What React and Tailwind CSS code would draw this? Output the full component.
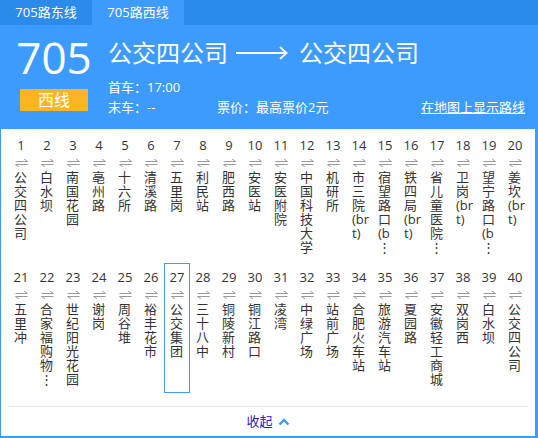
import React from "react";

const row1 = [
  ["公", "交", "四", "公", "司"],
  ["白", "水", "坝"],
  ["南", "国", "花", "园"],
  ["亳", "州", "路"],
  ["十", "六", "所"],
  ["清", "溪", "路"],
  ["五", "里", "岗"],
  ["利", "民", "站"],
  ["肥", "西", "路"],
  ["安", "医", "站"],
  ["安", "医", "附", "院"],
  ["中", "国", "科", "技", "大", "学"],
  ["机", "研", "所"],
  ["市", "三", "院", "(br", "t)"],
  ["宿", "望", "路", "口", "(b", "⋮"],
  ["铁", "四", "局", "(br", "t)"],
  ["省", "儿", "童", "医", "院", "⋮"],
  ["卫", "岗", "(br", "t)"],
  ["望", "宁", "路", "口", "(b", "⋮"],
  ["姜", "坎", "(br", "t)"],
];

const row2 = [
  ["五", "里", "冲"],
  ["合", "家", "福", "购", "物", "⋮"],
  ["世", "纪", "阳", "光", "花", "园"],
  ["谢", "岗"],
  ["周", "谷", "堆"],
  ["裕", "丰", "花", "市"],
  ["公", "交", "集", "团"],
  ["三", "十", "八", "中"],
  ["铜", "陵", "新", "村"],
  ["铜", "江", "路", "口"],
  ["凌", "湾"],
  ["中", "绿", "广", "场"],
  ["站", "前", "广", "场"],
  ["合", "肥", "火", "车", "站"],
  ["旅", "游", "汽", "车", "站"],
  ["夏", "园", "路"],
  ["安", "徽", "轻", "工", "商", "城"],
  ["双", "岗", "西"],
  ["白", "水", "坝"],
  ["公", "交", "四", "公", "司"],
];

function Arrows() {
  return (
    <svg width="13" height="8" viewBox="0 0 13 8" className="mx-auto mt-[6px]">
      <path d="M0.5 2.5H12.5L9 0" fill="none" stroke="#9a9a9a" strokeWidth="1" />
      <path d="M12.5 5.5H0.5L4 8" fill="none" stroke="#9a9a9a" strokeWidth="1" />
    </svg>
  );
}

function Station({ num, lines, current }) {
  return (
    <div
      className={
        "h-[130px] w-[26px] box-border " +
        (current ? "border border-[#3d9bfd]" : "border border-transparent")
      }
    >
      <div className="pt-[5px] text-center text-[13px] leading-[16px] text-[#333]">{num}</div>
      <Arrows />
      <div className="mt-[3px] pl-[5px] text-[13px] leading-[14px] text-[#333] whitespace-nowrap">
        {lines.map((c, i) => (
          <div key={i}>{c}</div>
        ))}
      </div>
    </div>
  );
}

export default function App() {
  return (
    <div
      className="w-[538px] h-[438px] flex flex-col bg-white"
      style={{ fontFamily: '"Open Sans", "Noto Sans CJK SC", sans-serif' }}
    >
      <div className="flex h-[25px] bg-[#2a8beb] text-white text-[13px] leading-[25px]">
        <div className="w-[92px] text-center">705路东线</div>
        <div className="w-[92px] text-center bg-[#3d9bfd]">705路西线</div>
      </div>

      <div className="flex h-[104px] bg-[#3d9bfd] text-white">
        <div className="w-[108px] flex flex-col items-center pt-[10px]">
          <div className="text-[44px] leading-[44px]">705</div>
          <div className="mt-[10px] w-[68px] h-[22px] bg-[#fbb423] text-center text-[16px] leading-[22px]">
            西线
          </div>
        </div>
        <div className="flex-1 flex flex-col pt-[14px]">
          <div className="flex items-center text-[24px] leading-[28px]">
            <span>公交四公司</span>
            <svg width="52" height="14" viewBox="0 0 52 14" className="ml-[8px] mr-[11px]">
              <path d="M0 7H50" stroke="white" strokeWidth="2" />
              <path d="M44 1L50.5 7L44 13" fill="none" stroke="white" strokeWidth="1.8" />
            </svg>
            <span>公交四公司</span>
          </div>
          <div className="mt-[10px] text-[13px] leading-[20px]">首车：17:00</div>
          <div className="flex text-[13px] leading-[20px] pr-[13px]">
            <span className="w-[109px]">末车：--</span>
            <span>票价：最高票价2元</span>
            <span className="ml-auto underline">在地图上显示路线</span>
          </div>
        </div>
      </div>

      <div className="flex-1 flex flex-col bg-white border-l border-r-[3px] border-b-2 border-[#3d9bfd] px-[7px] pt-[2px]">
        <div className="flex">
          {row1.map((l, i) => (
            <Station key={i} num={i + 1} lines={l} />
          ))}
        </div>
        <div className="flex mt-[2px]">
          {row2.map((l, i) => (
            <Station key={i} num={i + 21} lines={l} current={i + 21 === 27} />
          ))}
        </div>
        <div className="mt-[13px] h-px bg-[#e8e8e8]" />
        <div className="flex-1 flex items-center justify-center gap-[5px] text-[13px] text-[#2323c8]">
          <span>收起</span>
          <svg width="12" height="8" viewBox="0 0 12 8">
            <path d="M1.5 6.5L6 2L10.5 6.5" fill="none" stroke="#3d9bfd" strokeWidth="2.4" />
          </svg>
        </div>
      </div>
    </div>
  );
}
